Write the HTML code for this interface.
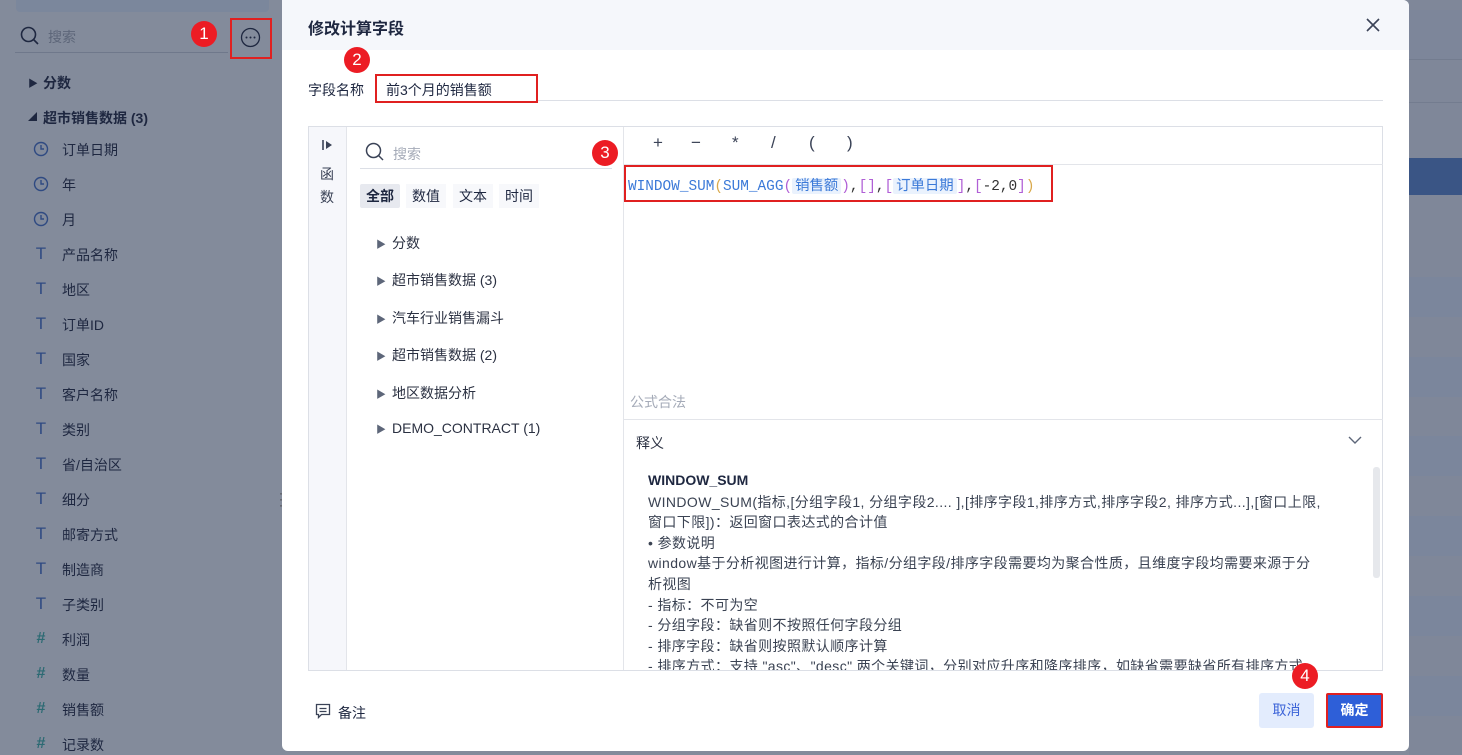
<!DOCTYPE html>
<html><head><meta charset="utf-8"><style>
*{box-sizing:border-box;margin:0;padding:0}
body{width:1462px;height:755px;overflow:hidden;position:relative;background:#838b9b;font-family:"Liberation Sans","Noto Sans CJK SC",sans-serif;font-size:14px;color:#1e2740}
.a{position:absolute}
.side{left:0;top:0;width:282px;height:755px;background:#838b9b}
.row{position:absolute;left:62px;font-size:14px;color:#1e2740}
.ic{position:absolute;left:33px;width:16px;text-align:center;color:#2f4a82;font-size:17px}
.ich{color:#2c6a73;font-weight:bold;font-size:16px}
.badge{position:absolute;width:26px;height:26px;border-radius:50%;background:#ec1c24;color:#fff;font-size:17px;text-align:center;line-height:26px}
.modal{left:282px;top:0;width:1127px;height:751px;background:#fff;border-radius:0 6px 6px 6px}
.desc{font-size:14px;color:#3a4252;line-height:20.6px;white-space:nowrap;letter-spacing:0.4px}
.tag{background:#eaf2fd;color:#3b79d8;padding:0 3px;border-radius:2px}
.fi{position:absolute;left:94px;color:#2b3142}
.fi span{font-size:10px;color:#5d6679;margin-right:6px}
.op{position:absolute;top:133px;font-size:17px;color:#3b4357}
</style></head><body>
<div class="a side">
 <div class="a" style="left:16px;top:0;width:253px;height:12px;background:#7b879c;border-radius:0 0 4px 4px"></div>
 <svg class="a" style="left:20px;top:26px" width="20" height="20"><circle cx="8.5" cy="8.5" r="7" fill="none" stroke="#1e2740" stroke-width="1.6"/><line x1="13.5" y1="13.5" x2="18" y2="18" stroke="#1e2740" stroke-width="1.6"/></svg>
 <div class="a" style="left:48px;top:27px;color:#5d6679">搜索</div>
 <div class="a" style="left:15px;top:52px;width:213px;height:1px;background:#6f788b"></div>
 <div class="a" style="left:230px;top:18px;width:42px;height:41px;border:2px solid #e02020"></div>
 <svg class="a" style="left:240px;top:27px" width="21" height="21"><circle cx="10.5" cy="10.5" r="9" fill="none" stroke="#1e2740" stroke-width="1.3"/><circle cx="6.5" cy="10.5" r="1" fill="#1e2740"/><circle cx="10.5" cy="10.5" r="1" fill="#1e2740"/><circle cx="14.5" cy="10.5" r="1" fill="#1e2740"/></svg>
 <div class="badge" style="left:191px;top:21px">1</div>
 <div class="a" style="left:28px;top:75px;font-size:10px">▶</div>
 <div class="a" style="left:43px;top:73px;font-weight:bold">分数</div>
 <div class="a" style="left:28px;top:110px;font-size:9px">◢</div>
 <div class="a" style="left:43px;top:108px;font-weight:bold">超市销售数据 (3)</div>
 <svg class="a" style="left:33px;top:141px" width="16" height="16"><circle cx="8" cy="8" r="6.5" fill="none" stroke="#2f4a82" stroke-width="1.4"/><path d="M8 4v4h3" fill="none" stroke="#2f4a82" stroke-width="1.4"/></svg>
 <svg class="a" style="left:33px;top:176px" width="16" height="16"><circle cx="8" cy="8" r="6.5" fill="none" stroke="#2f4a82" stroke-width="1.4"/><path d="M8 4v4h3" fill="none" stroke="#2f4a82" stroke-width="1.4"/></svg>
 <svg class="a" style="left:33px;top:211px" width="16" height="16"><circle cx="8" cy="8" r="6.5" fill="none" stroke="#2f4a82" stroke-width="1.4"/><path d="M8 4v4h3" fill="none" stroke="#2f4a82" stroke-width="1.4"/></svg>
 <div class="row" style="top:140px">订单日期</div>
 <div class="row" style="top:175px">年</div>
 <div class="row" style="top:210px">月</div>
 <div class="ic" style="top:244px">T</div><div class="row" style="top:245px">产品名称</div>
 <div class="ic" style="top:279px">T</div><div class="row" style="top:280px">地区</div>
 <div class="ic" style="top:314px">T</div><div class="row" style="top:315px">订单ID</div>
 <div class="ic" style="top:349px">T</div><div class="row" style="top:350px">国家</div>
 <div class="ic" style="top:384px">T</div><div class="row" style="top:385px">客户名称</div>
 <div class="ic" style="top:419px">T</div><div class="row" style="top:420px">类别</div>
 <div class="ic" style="top:454px">T</div><div class="row" style="top:455px">省/自治区</div>
 <div class="ic" style="top:489px">T</div><div class="row" style="top:490px">细分</div>
 <div class="ic" style="top:524px">T</div><div class="row" style="top:525px">邮寄方式</div>
 <div class="ic" style="top:559px">T</div><div class="row" style="top:560px">制造商</div>
 <div class="ic" style="top:594px">T</div><div class="row" style="top:595px">子类别</div>
 <div class="ic ich" style="top:630px">#</div><div class="row" style="top:630px">利润</div>
 <div class="ic ich" style="top:665px">#</div><div class="row" style="top:665px">数量</div>
 <div class="ic ich" style="top:700px">#</div><div class="row" style="top:700px">销售额</div>
 <div class="ic ich" style="top:735px">#</div><div class="row" style="top:735px">记录数</div>
 <div class="a" style="left:279px;top:490px;color:#444;font-size:12px;line-height:6px">·<br>·<br>·</div>
</div>
<div class="a" style="left:1409px;top:0;width:53px;height:755px;background:#7f8799"></div>
<div class="a" style="left:1409px;top:10px;width:53px;height:50px;background:#7d869a;border-bottom:1px solid #737c8f"></div>
<div class="a" style="left:1409px;top:102px;width:53px;height:1px;background:#737c8f"></div>
<div class="a" style="left:1409px;top:158px;width:53px;height:37px;background:#3a5585"></div>
<div class="a" style="left:1409px;top:277px;width:53px;height:40px;background:#7b869c"></div>
<div class="a" style="left:1409px;top:357px;width:53px;height:40px;background:#7b869c"></div>
<div class="a" style="left:1409px;top:436px;width:53px;height:40px;background:#7b869c"></div>
<div class="a" style="left:1409px;top:516px;width:53px;height:40px;background:#7b869c"></div>
<div class="a" style="left:1409px;top:596px;width:53px;height:40px;background:#7b869c"></div>
<div class="a" style="left:1409px;top:676px;width:53px;height:40px;background:#7b869c"></div>

<div class="a modal">
 <div class="a" style="left:0;top:0;width:1127px;height:50px;background:#f5f7fb;border-radius:0 6px 0 0"></div>
 <div class="a" style="left:26px;top:15px;font-size:16px;font-weight:bold;color:#1e2740">修改计算字段</div>
 <svg class="a" style="left:1083px;top:17px" width="16" height="16"><path d="M2 2L14 14M14 2L2 14" stroke="#3b4357" stroke-width="1.6"/></svg>
 <div class="a" style="left:26px;top:80px">字段名称</div>
 <div class="a" style="left:93px;top:100px;width:1008px;height:1px;background:#dcdfe6"></div>
 <div class="a" style="left:93px;top:74px;width:163px;height:29px;border:2px solid #e02020;background:#fff"></div>
 <div class="a" style="left:104px;top:80px">前3个月的销售额</div>
 <div class="badge" style="left:62px;top:47px">2</div>
 <div class="a" style="left:26px;top:126px;width:1075px;height:545px;border:1px solid #dcdfe6"></div>
 <div class="a" style="left:27px;top:127px;width:38px;height:543px;background:#f6f7fb;border-right:1px solid #e3e5ea"></div>
 <svg class="a" style="left:39px;top:138px" width="14" height="14"><path d="M2 2v10" stroke="#3b4357" stroke-width="1.6"/><path d="M5 3l6 4-6 4z" fill="#3b4357"/></svg>
 <div class="a" style="left:38px;top:163px;line-height:23px;color:#3b4357">函<br>数</div>
 <div class="a" style="left:341px;top:127px;width:1px;height:543px;background:#e3e5ea"></div>
 <svg class="a" style="left:83px;top:142px" width="20" height="20"><circle cx="8.5" cy="8.5" r="7" fill="none" stroke="#3b4357" stroke-width="1.5"/><line x1="13.5" y1="13.5" x2="18" y2="18" stroke="#3b4357" stroke-width="1.5"/></svg>
 <div class="a" style="left:111px;top:144px;color:#a5abb8">搜索</div>
 <div class="a" style="left:78px;top:168px;width:252px;height:1px;background:#dcdfe6"></div>
 <div class="a" style="left:78px;top:184px;width:40px;height:24px;background:#e7e9ef;border-radius:2px;text-align:center;line-height:24px;font-weight:bold">全部</div>
 <div class="a" style="left:124px;top:184px;width:40px;height:24px;background:#f7f8fb;text-align:center;line-height:24px">数值</div>
 <div class="a" style="left:171px;top:184px;width:40px;height:24px;background:#f7f8fb;text-align:center;line-height:24px">文本</div>
 <div class="a" style="left:217px;top:184px;width:40px;height:24px;background:#f7f8fb;text-align:center;line-height:24px">时间</div>
 <div class="fi" style="top:233px"><span>▶</span>分数</div>
 <div class="fi" style="top:270px"><span>▶</span>超市销售数据 (3)</div>
 <div class="fi" style="top:308px"><span>▶</span>汽车行业销售漏斗</div>
 <div class="fi" style="top:345px"><span>▶</span>超市销售数据 (2)</div>
 <div class="fi" style="top:383px"><span>▶</span>地区数据分析</div>
 <div class="fi" style="top:420px"><span>▶</span>DEMO_CONTRACT (1)</div>
 <div class="badge" style="left:310px;top:140px">3</div>
 <div class="op" style="left:371px">+</div>
 <div class="op" style="left:409px">−</div>
 <div class="op" style="left:450px">*</div>
 <div class="op" style="left:489px">/</div>
 <div class="op" style="left:527px">(</div>
 <div class="op" style="left:565px">)</div>
 <div class="a" style="left:342px;top:164px;width:759px;height:1px;background:#e3e5ea"></div>
 <div class="a" style="left:342px;top:165px;width:429px;height:37px;border:2px solid #e02020"></div>
 <div class="a" style="left:346px;top:174px;font-family:'Liberation Mono','Noto Sans CJK SC',monospace;font-size:14.4px;color:#3b79d8;white-space:nowrap">WINDOW_SUM<span style="color:#d9a94b">(</span>SUM_AGG<span style="color:#b05fd6">(</span><span class="tag" style="font-family:'Liberation Sans','Noto Sans CJK SC',sans-serif">销售额</span><span style="color:#b05fd6">)</span><span style="color:#333">,</span><span style="color:#b05fd6">[]</span><span style="color:#333">,</span><span style="color:#b05fd6">[</span><span class="tag" style="font-family:'Liberation Sans','Noto Sans CJK SC',sans-serif">订单日期</span><span style="color:#b05fd6">]</span><span style="color:#333">,</span><span style="color:#b05fd6">[</span><span style="color:#333">-2,0</span><span style="color:#b05fd6">]</span><span style="color:#d9a94b">)</span></div>
 <div class="a" style="left:348px;top:392px;color:#a5abb8">公式合法</div>
 <div class="a" style="left:342px;top:419px;width:759px;height:1px;background:#e3e5ea"></div>
 <div class="a" style="left:354px;top:433px;color:#2b3142">释义</div>
 <svg class="a" style="left:1065px;top:434px" width="16" height="12"><path d="M2 3l6 6 6-6" fill="none" stroke="#5d6679" stroke-width="1.4"/></svg>
 <div class="a" style="left:1091px;top:467px;width:7px;height:111px;background:#e6e8ec;border-radius:3px"></div>
 <div class="a" style="left:342px;top:462px;width:748px;height:208px;overflow:hidden">
  <div class="a desc" style="left:24px;top:8px">
   <div style="font-weight:bold;color:#1e2740;margin-bottom:1px;letter-spacing:0">WINDOW_SUM</div>
   WINDOW_SUM(指标,[分组字段1, 分组字段2.... ],[排序字段1,排序方式,排序字段2, 排序方式...],[窗口上限,<br>窗口下限])：返回窗口表达式的合计值<br>
   • 参数说明<br>
   window基于分析视图进行计算，指标/分组字段/排序字段需要均为聚合性质，且维度字段均需要来源于分<br>析视图<br>
   - 指标：不可为空<br>
   - 分组字段：缺省则不按照任何字段分组<br>
   - 排序字段：缺省则按照默认顺序计算<br>
   - 排序方式：支持 "asc"、"desc" 两个关键词，分别对应升序和降序排序，如缺省需要缺省所有排序方式。
  </div>
 </div>
 <svg class="a" style="left:33px;top:703px" width="16" height="16"><path d="M1.5 1.5h13v10h-8l-3 3v-3h-2z" fill="none" stroke="#3b4357" stroke-width="1.3"/><path d="M4.5 5.5h7M4.5 8.5h7" stroke="#3b4357" stroke-width="1.2"/></svg>
 <div class="a" style="left:56px;top:703px">备注</div>
 <div class="a" style="left:977px;top:693px;width:55px;height:35px;background:#e3ecfd;border-radius:3px;color:#3b63d8;text-align:center;line-height:35px">取消</div>
 <div class="a" style="left:1044px;top:693px;width:57px;height:35px;background:#2e5fd8;border:2px solid #e02020;border-radius:2px;color:#fff;text-align:center;line-height:31px;font-weight:bold">确定</div>
 <div class="badge" style="left:1010px;top:663px">4</div>
</div>
</body></html>
